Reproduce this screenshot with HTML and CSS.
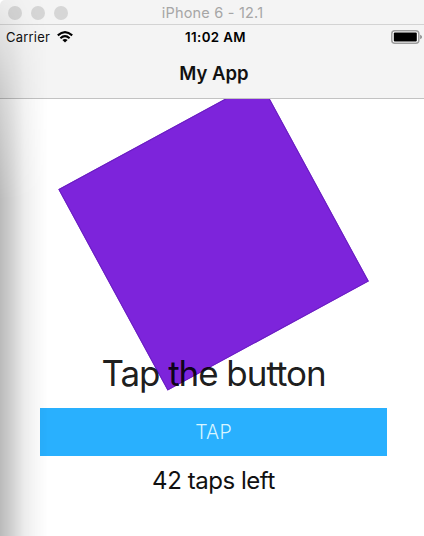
FILE: index.html
```html
<!DOCTYPE html>
<html lang="en">
<head>
<meta charset="utf-8">
<title>My App</title>
<link rel="stylesheet" href="styles.css">
</head>
<body>
<div class="window">
  <header class="titlebar">
    <div class="lights"><i></i><i></i><i></i></div>
    <span class="device">iPhone 6 - 12.1</span>
  </header>
  <div class="navbar">
    <div class="status">
      <div class="carrier"><span>Carrier</span>
        <svg class="wifi" viewBox="0 0 16 12"><g fill="none" stroke="#000" stroke-width="2.1"><path d="M.8 4.4Q8-2 15.2 4.4"/><path d="M3.4 7.2Q8 3 12.6 7.2"/></g><path d="M5.4 8.9Q8 6.9 10.6 8.9L8 11.6Z"/></svg>
      </div>
      <span class="time">11:02 AM</span>
      <svg class="battery" viewBox="0 0 32 14"><rect x=".8" y=".8" width="27" height="12.4" rx="3" fill="#fff" stroke="#9c9c9c" stroke-width="1.5"/><rect x="2.8" y="2.5" width="23" height="9" rx="1" fill="#000"/><path d="M29.2 4.7Q31 5.4 31 7T29.2 9.3Z" fill="#888"/></svg>
    </div>
    <h1 class="apptitle"><span>My App</span></h1>
  </div>
  <main class="content">
    <div class="square"></div>
    <p class="prompt"><span>Tap the button</span></p>
    <button class="tap"><span>TAP</span></button>
    <p class="left"><span>42 taps left</span></p>
  </main>
  <div class="shade"></div>
</div>
</body>
</html>
```
FILE: styles.css
```css
* { box-sizing: border-box; }
body { margin: 0; background: #fff; font-family: Inter, "Liberation Sans", sans-serif; color: #111; }
.window { position: relative; width: 424px; height: 536px; overflow: hidden; display: flex; flex-direction: column; border-top-left-radius: 5px; }
.titlebar { display: grid; grid-template-columns: 71px 1fr 70px; align-items: center; height: 25px; background: #f4f4f4; border-bottom: 1px solid #d3d3d3; }
.lights { display: flex; gap: 9px; padding-left: 8px; }
.lights i { width: 14px; height: 14px; border-radius: 50%; background: #d6d6d6; }
.device { text-align: center; font-size: 14.5px; letter-spacing: .2px; color: #a6a6a6; line-height: 24px; padding-top: 1px; }
.navbar { height: 74px; background: #f4f4f4; border-bottom: 1px solid #c2c2c2; }
.status { display: grid; grid-template-columns: 1fr auto 1fr; align-items: center; height: 24px; font-size: 13px; }
.carrier { display: flex; align-items: center; gap: 7px; padding-left: 6px; letter-spacing: .2px; }
.wifi { width: 16px; height: 12px; }
.time { font-weight: 600; font-size: 13.3px; letter-spacing: .4px; color: #000; padding-left: 7px; }
.battery { width: 32px; height: 14px; justify-self: end; margin-right: 1px; }
.apptitle { margin: 0; text-align: center; font-size: 18.5px; font-weight: 600; line-height: 49px; padding-left: 4px; }
.content { position: relative; flex: 1; overflow: hidden; display: flex; flex-direction: column; padding: 250px 37px 0 40px; }
.square { position: absolute; left: 99.2px; top: 22.2px; width: 228.5px; height: 228.5px; background: #7d24db; border: 1px solid #6a1fc0; transform: rotate(-28.5deg); }
.prompt { position: relative; margin: 0; height: 59px; line-height: 49px; font-size: 35px; letter-spacing: -1.05px; text-align: center; white-space: nowrap; color: rgba(0,0,0,.9); }
.tap { height: 48px; padding: 0; border: 0; background: #29b0fe; color: #d8f5ff; font: 300 19.5px Inter, sans-serif; letter-spacing: .2px; }
.left { margin: 0; line-height: 50px; font-size: 24px; letter-spacing: -.45px; text-align: center; }
.shade { position: absolute; inset: 0 auto 0 0; width: 48px; background: linear-gradient(to right, rgba(0,0,0,.27), rgba(0,0,0,.18) 25%, rgba(0,0,0,.08) 50%, rgba(0,0,0,.03) 75%, transparent); mask-image: linear-gradient(to bottom, rgba(0,0,0,.1), rgba(0,0,0,.65) 100px, #000 200px); }
```
